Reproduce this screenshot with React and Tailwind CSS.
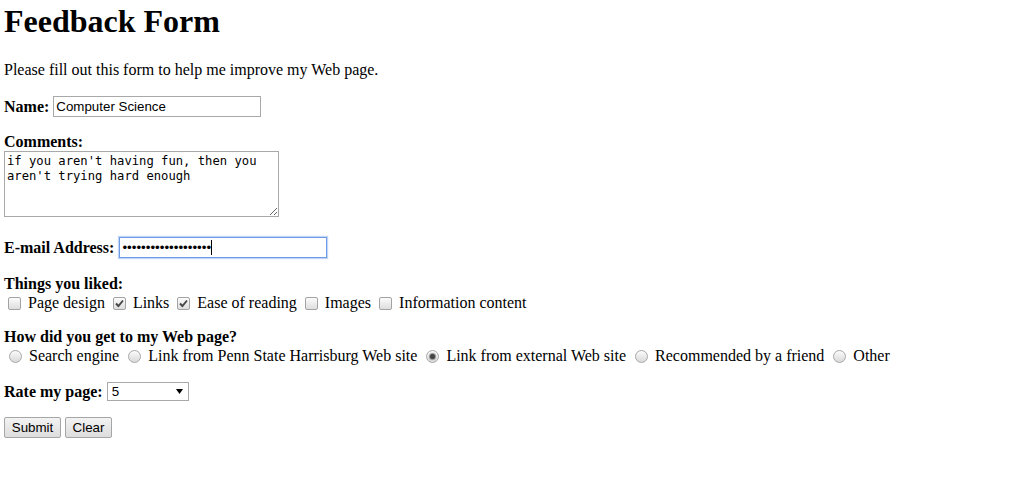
import React from 'react';

const serif = "font-['Liberation_Serif','Times_New_Roman',serif]";
const sans = "font-['Liberation_Sans',Arial,sans-serif]";

function Box({ checked }) {
  return (
    <span className="inline-block w-[13px] h-[13px] ml-[4px] mr-[3px] align-[-2px] border border-[#a3a3a3] rounded-[2px] bg-linear-to-b from-[#fbfbfb] to-[#dedede]">
      {checked && (
        <svg width="11" height="11" viewBox="0 0 11 11" className="block">
          <path d="M2 5.5 L4.4 8 L9 2.5" fill="none" stroke="#464646" strokeWidth="1.9" />
        </svg>
      )}
    </span>
  );
}

function Radio({ checked }) {
  return (
    <span className="inline-block w-[13px] h-[13px] ml-[5px] mr-[3px] align-[-2px] border border-[#a8a8a8] rounded-full bg-linear-to-b from-[#fbfbfb] to-[#d9d9d9]">
      {checked && <span className="block w-[5px] h-[5px] mt-[3px] mx-auto rounded-full bg-[#444444] shadow-[0_0_1px_1px_#8c8c8c]" />}
    </span>
  );
}

export default function App() {
  return (
    <div className={`${serif} text-[16px] text-black bg-white min-h-[478px] px-[4px] pt-[3px]`}>
      <h1 className="text-[32px] font-bold leading-[37px] mb-[21px]">Feedback Form</h1>

      <p className="leading-[18px] mb-[17px]">Please fill out this form to help me improve my Web page.</p>

      <div className="flex items-center h-[21px]">
        <b className="mr-[4px] leading-[18px]">Name:</b>
        <input
          readOnly
          value="Computer Science"
          className={`${sans} text-[13.33px] w-[208px] h-[21px] border border-[#a9a9a9] px-[2px] bg-white outline-none`}
        />
      </div>

      <div className="mt-[16px] leading-[18px] font-bold">Comments:</div>
      <textarea
        readOnly
        defaultValue="if you aren't having fun, then you aren't trying hard enough"
        className="block font-['DejaVu_Sans_Mono',monospace] text-[12.2px] leading-[15px] w-[275px] h-[66px] border border-[#a9a9a9] p-[2px] bg-white resize outline-none"
      />

      <div className="mt-[20px] flex items-center h-[21px]">
        <b className="mr-[5px] leading-[18px]">E-mail Address:</b>
        <div className={`${sans} text-[13.33px] w-[208px] h-[21px] border border-[#6f9ae6] shadow-[0_0_1px_1px_#c2d6f6] px-[2px] bg-white flex items-center`}>
          <span>•••••••••••••••••••</span>
          <span className="inline-block w-[1px] h-[15px] bg-black" />
        </div>
      </div>

      <div className="mt-[17px] leading-[18px] font-bold">Things you liked:</div>
      <div className="leading-[18px] pt-[1px] whitespace-nowrap">
        <Box /> Page design <Box checked /> Links <Box checked /> Ease of reading <Box /> Images <Box /> Information content
      </div>

      <div className="mt-[16px] leading-[18px] font-bold">How did you get to my Web page?</div>
      <div className="leading-[18px] pt-[1px] whitespace-nowrap">
        <Radio /> Search engine <Radio /> Link from Penn State Harrisburg Web site <Radio checked /> Link from external Web site <Radio /> Recommended by a friend <Radio /> Other
      </div>

      <div className="mt-[17px] flex items-center h-[19px]">
        <b className="mr-[4px] leading-[18px]">Rate my page:</b>
        <div className={`${sans} text-[13.33px] w-[82px] h-[19px] border border-[#a9a9a9] bg-white pl-[4px] pr-[5px] flex items-center justify-between`}>
          <span>5</span>
          <svg width="7" height="5" viewBox="0 0 7 5">
            <polygon points="0,0 7,0 3.5,5" fill="#000" />
          </svg>
        </div>
      </div>

      <div className="mt-[16px] flex gap-[4px]">
        <button className={`${sans} text-[13.33px] w-[57px] h-[21px] border border-[#a6a6a6] rounded-[2px] bg-linear-to-b from-[#f3f3f3] to-[#dddddd]`}>
          Submit
        </button>
        <button className={`${sans} text-[13.33px] w-[47px] h-[21px] border border-[#a6a6a6] rounded-[2px] bg-linear-to-b from-[#f3f3f3] to-[#dddddd]`}>
          Clear
        </button>
      </div>
    </div>
  );
}
